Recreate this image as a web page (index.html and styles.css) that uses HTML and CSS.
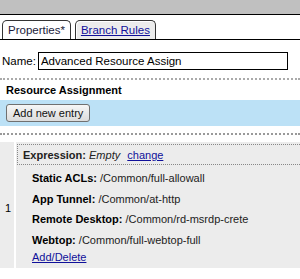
FILE: index.html
```html
<!DOCTYPE html>
<html lang="en">
<head>
    <meta charset="UTF-8">
    <title>Resource Assign</title>
    <link rel="stylesheet" href="styles.css">
</head>
<body>
    <div class="topbar"></div>

    <div class="tabs">
        <div class="tab active">Properties*</div>
        <div class="tab"><a href="#">Branch Rules</a></div>
    </div>

    <div class="name-row">
        <label for="name">Name:</label>
        <input id="name" type="text" value="Advanced Resource Assign">
    </div>

    <div class="section">
        <h3>Resource Assignment</h3>
        <div class="toolbar">
            <button class="btn">Add new entry</button>
        </div>
    </div>

    <div class="entries">
        <div class="entry-num">1</div>
        <div class="entry-body">
            <div class="expression">
                <b>Expression:</b> <i>Empty</i> <a href="#">change</a>
            </div>
            <ul class="assign-list">
                <li><b>Static ACLs:</b> /Common/full-allowall</li>
                <li><b>App Tunnel:</b> /Common/at-http</li>
                <li><b>Remote Desktop:</b> /Common/rd-msrdp-crete</li>
                <li><b>Webtop:</b> /Common/full-webtop-full</li>
                <li class="add"><a href="#">Add/Delete</a></li>
            </ul>
        </div>
    </div>
</body>
</html>
```

FILE: styles.css
```css
body {
    margin: 0;
    font-family: 'Liberation Sans', Arial, sans-serif;
    font-size: 11px;
    color: #000;
    background: #fff;
    overflow: hidden;
}

a {
    color: #10109a;
}

.topbar {
    height: 14px;
    background: #c0c0c0;
    border-bottom: 1px solid #000;
}

.tabs {
    display: flex;
    gap: 4px;
    padding: 5px 0 0 2px;
    border-bottom: 1px solid #000;
}

.tab {
    height: 18px;
    line-height: 19px;
    padding: 0 5px;
    border: 1px solid #333;
    border-bottom: none;
    border-radius: 5px 5px 0 0;
    background: #ececec;
    font-size: 11.5px;
    box-shadow: inset 1px 1px 0 #fff;
}

.tab.active {
    background: #fff;
    color: #1a1a3a;
}

.name-row {
    display: flex;
    align-items: center;
    gap: 2px;
    padding: 12px 0 0 2px;
    height: 18px;
}

.name-row label {
    font-size: 11.5px;
}

.name-row input {
    box-sizing: border-box;
    width: 250px;
    height: 18px;
    margin: 0;
    padding: 0 2px;
    border: 1px solid #000;
    font-family: inherit;
    font-size: 11.5px;
    color: #000;
}

.section {
    margin-top: 8px;
    border-top: 2px dotted #aaa;
    border-bottom: 2px dotted #999;
    padding-bottom: 7px;
}

.section h3 {
    margin: 0;
    padding: 4px 0 0 6px;
    height: 16px;
    font-size: 11px;
}

.toolbar {
    background: #bce1f6;
    height: 26px;
    padding: 4px 0 0 6px;
    box-sizing: border-box;
}

.btn {
    height: 18px;
    padding: 0 6px;
    border: 1px solid #707070;
    border-radius: 3px;
    background: linear-gradient(#f6f6f6, #dcdcdc);
    font-family: inherit;
    font-size: 11px;
    color: #111;
}

.entries {
    margin-top: 7px;
    display: grid;
    grid-template-columns: 14px 1fr;
    column-gap: 2px;
    height: 126px;
}

.entry-num {
    background: #ececec;
    display: flex;
    align-items: center;
    padding: 6px 0 0 5px;
}

.entry-body {
    background: #ececec;
    padding: 2px 0 0 1px;
}

.expression {
    border: 1px dotted #888;
    border-right: none;
    height: 19px;
    line-height: 21px;
    padding-left: 5px;
    color: #222;
}

.expression a {
    margin-left: 4px;
}

.assign-list {
    list-style: none;
    margin: 0;
    padding: 3px 0 0 15px;
}

.assign-list li {
    height: 20.7px;
    line-height: 20px;
    color: #222;
}

.assign-list li b {
    color: #000;
}

.assign-list li.add {
    height: 15px;
    line-height: 13px;
}
```
